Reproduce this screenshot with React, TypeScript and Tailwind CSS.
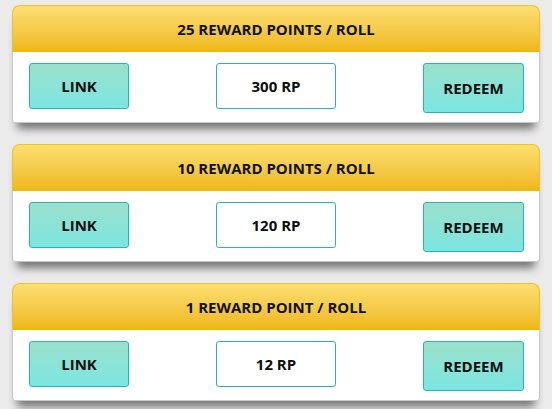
import React from "react";

const rows = [
  { title: "25 REWARD POINTS / ROLL", rp: "300 RP" },
  { title: "10 REWARD POINTS / ROLL", rp: "120 RP" },
  { title: "1 REWARD POINT / ROLL", rp: "12 RP" },
];

function Card({ title, rp }: { title: string; rp: string }) {
  return (
    <div className="rounded-t-[8px] rounded-b-[3px] shadow-[0_11px_8px_-5px_rgba(0,0,0,0.5)]">
      <div className="h-[47px] flex items-center justify-center rounded-t-[8px] border border-b-0 border-[#f3c21e] bg-gradient-to-b from-[#fddf6f] to-[#eeb70c] text-[15px] font-bold text-[#111] pt-[1px]">
        {title}
      </div>
      <div className="h-[71px] bg-white border border-t-0 border-[#c8c8c8] rounded-b-[3px] flex items-start justify-between pl-[16px] pr-[15px] pt-[11px]">
        <div className="w-[100px] h-[46px] flex items-center justify-center rounded-[3px] border border-[#29b3b8] bg-gradient-to-b from-[#9ae0cb] to-[#7be6e1] text-[15px] font-bold text-[#0d0d0d]">
          LINK
        </div>
        <div className="w-[120px] h-[46px] flex items-center justify-center rounded-[3px] border border-[#29b3b8] bg-white text-[15px] font-bold text-[#0d0d0d]">
          {rp}
        </div>
        <div className="w-[101px] h-[50px] flex items-center justify-center rounded-[3px] border border-[#29b3b8] bg-gradient-to-b from-[#9ae0cb] to-[#7be6e1] text-[15px] font-bold text-[#0d0d0d]">
          REDEEM
        </div>
      </div>
    </div>
  );
}

export default function App() {
  return (
    <div
      className="w-[552px] h-[409px] overflow-hidden bg-[#ebebeb] pt-[5px] pl-[12px] pr-[12px] flex flex-col gap-[21px]"
      style={{ fontFamily: '"Open Sans", "Noto Sans", sans-serif' }}
    >
      {rows.map((r) => (
        <Card key={r.title} title={r.title} rp={r.rp} />
      ))}
    </div>
  );
}
